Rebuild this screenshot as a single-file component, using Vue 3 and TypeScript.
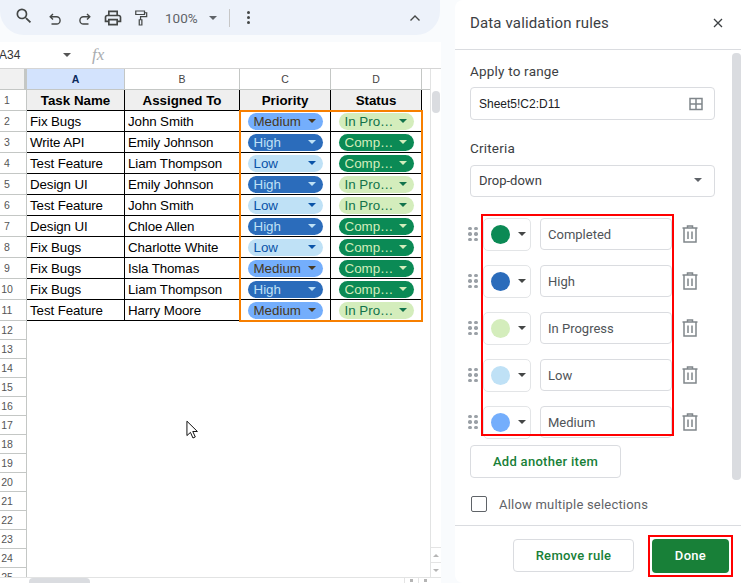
<script setup lang="ts">
interface Task {
  task: string
  person: string
  priority: string
  status: string
}

const tasks: Task[] = [
  { task: 'Fix Bugs', person: 'John Smith', priority: 'Medium', status: 'In Progress' },
  { task: 'Write API', person: 'Emily Johnson', priority: 'High', status: 'Completed' },
  { task: 'Test Feature', person: 'Liam Thompson', priority: 'Low', status: 'Completed' },
  { task: 'Design UI', person: 'Emily Johnson', priority: 'High', status: 'In Progress' },
  { task: 'Test Feature', person: 'John Smith', priority: 'Low', status: 'In Progress' },
  { task: 'Design UI', person: 'Chloe Allen', priority: 'High', status: 'Completed' },
  { task: 'Fix Bugs', person: 'Charlotte White', priority: 'Low', status: 'Completed' },
  { task: 'Fix Bugs', person: 'Isla Thomas', priority: 'Medium', status: 'Completed' },
  { task: 'Fix Bugs', person: 'Liam Thompson', priority: 'High', status: 'Completed' },
  { task: 'Test Feature', person: 'Harry Moore', priority: 'Medium', status: 'In Progress' }
]

const items = [
  { label: 'Completed', cls: 'completed' },
  { label: 'High', cls: 'high' },
  { label: 'In Progress', cls: 'progress' },
  { label: 'Low', cls: 'low' },
  { label: 'Medium', cls: 'medium' }
]

const emptyRows = Array.from({ length: 14 }, (_, i) => i + 12)

const chipClass = (value: string) => value.toLowerCase().replace('in ', '')
</script>

<template>
  <div class="app">
    <div class="left">
      <div class="toolbar">
        <svg class="tool search" viewBox="0 0 24 24" width="20" height="20"><path d="M15.5 14h-.79l-.28-.27A6.471 6.471 0 0 0 16 9.5 6.5 6.5 0 1 0 9.5 16c1.61 0 3.09-.59 4.23-1.57l.27.28v.79l5 4.99L20.49 19l-4.99-5zm-6 0C7.01 14 5 11.99 5 9.5S7.01 5 9.5 5 14 7.01 14 9.5 11.99 14 9.5 14z" /></svg>
        <svg class="tool line undo" viewBox="0 0 14 14" width="14" height="14"><path d="M5 2 2.2 4.8 5 7.6M2.2 4.8H8.5a3.6 3.6 0 0 1 0 7.2H3.5" /></svg>
        <svg class="tool line redo" viewBox="0 0 14 14" width="14" height="14"><path d="M9 2l2.8 2.8L9 7.600M11.800 4.800H5.500a3.600 3.600 0 0 0 0 7.200H10.500" /></svg>
        <svg class="tool print" viewBox="0 0 24 24" width="20" height="20"><path d="M19 8h-1V3H6v5H5c-1.660 0-3 1.340-3 3v6h4v4h12v-4h4v-6c0-1.660-1.340-3-3-3zM8 5h8v3H8V5zm8 12v2H8v-4h8v2zm2-2v-2H6v2H4v-4c0-.55.45-1 1-1h14c.55 0 1 .45 1 1v4h-2z" /></svg>
        <svg class="tool line roller" viewBox="0 0 16 20" width="14" height="18"><path d="M2 2h10v4H2zM12 4h2.500v4.500H7.500V12M6 12h3v6H6z" /></svg>
        <span class="zoom-level">100%</span>
        <span class="caret zoom-caret"></span>
        <span class="tool-sep"></span>
        <span class="dots"><i></i><i></i><i></i></span>
        <svg class="tool line chevron" viewBox="0 0 12 8" width="12" height="8"><path d="M1.500 6.500 6 2l4.500 4.500" /></svg>
      </div>

      <div class="formula-bar">
        <span class="name-box">A34</span>
        <span class="caret name-caret"></span>
        <span class="fx">fx</span>
      </div>

      <div class="sheet">
        <div class="grid-area">
          <div class="col-head">
            <div class="corner"></div>
            <div class="col-label selected">A</div>
            <div class="col-label">B</div>
            <div class="col-label">C</div>
            <div class="col-label">D</div>
            <div class="col-rest"></div>
          </div>
          <div class="row">
            <div class="row-num tall">1</div>
            <div class="cell head">Task Name</div>
            <div class="cell head">Assigned To</div>
            <div class="cell head">Priority</div>
            <div class="cell head">Status</div>
          </div>
          <div v-for="(t, i) in tasks" :key="i" class="row">
            <div class="row-num tall">{{ i + 2 }}</div>
            <div class="cell">{{ t.task }}</div>
            <div class="cell">{{ t.person }}</div>
            <div class="cell chip-cell">
              <span class="chip" :class="chipClass(t.priority)"><span class="chip-text">{{ t.priority }}</span><span class="chip-arrow"></span></span>
            </div>
            <div class="cell chip-cell">
              <span class="chip" :class="chipClass(t.status)"><span class="chip-text">{{ t.status }}</span><span class="chip-arrow"></span></span>
            </div>
          </div>
          <div v-for="n in emptyRows" :key="n" class="row-num short">{{ n }}</div>
          <div class="selection"></div>
          <svg class="cursor" viewBox="0 0 14 21" width="13" height="20"><path d="M1 1v15.500l3.800-3.400 2.700 6 2.500-1.100-2.700-5.900h5z" fill="#fff" stroke="#000" stroke-width="1" /></svg>
        </div>
        <div class="v-scroll">
          <div class="v-thumb"></div>
          <div class="v-arrows">
            <span class="mini up"></span>
            <span class="mini down"></span>
          </div>
        </div>
      </div>
      <div class="h-scroll">
        <div class="h-thumb"></div>
        <span class="h-btn"><i class="left-arrow"></i></span>
        <span class="h-btn"><i class="right-arrow"></i></span>
      </div>
    </div>

    <aside class="panel">
      <header class="panel-head">
        <h2>Data validation rules</h2>
        <svg class="close" viewBox="0 0 12 12" width="12" height="12"><path d="M2 2l8 8M10 2l-8 8" /></svg>
      </header>

      <div class="panel-body">
        <div class="form">
          <label class="field-label">Apply to range</label>
          <div class="input range-input">
            <span>Sheet5!C2:D11</span>
            <svg viewBox="0 0 14 14" width="14" height="14"><path d="M1 1.500h12v11H1zM7 1.500v11M1 7h12" /></svg>
          </div>

          <label class="field-label criteria">Criteria</label>
          <div class="input select-input">
            <span>Drop-down</span>
            <span class="caret"></span>
          </div>

          <div class="items">
            <div v-for="item in items" :key="item.label" class="item">
              <span class="grip"><i v-for="d in 6" :key="d"></i></span>
              <div class="color-btn">
                <span class="swatch" :class="item.cls"></span>
                <span class="caret"></span>
              </div>
              <div class="item-input">{{ item.label }}</div>
              <svg class="trash" viewBox="0 0 16 18" width="16" height="18"><path d="M0.500 3h15M5.500 3V1h5v2M2 3v14h12V3M6 6.500v7.500M10 6.500v7.500" /></svg>
            </div>
            <div class="red-box"></div>
          </div>

          <button class="add-btn" type="button">Add another item</button>

          <label class="check-row">
            <span class="checkbox"></span>
            <span>Allow multiple selections</span>
          </label>
        </div>
        <div class="panel-scroll"></div>
      </div>

      <footer class="panel-foot">
        <button class="remove-btn" type="button">Remove rule</button>
        <div class="done-wrap">
          <button class="done-btn" type="button">Done</button>
        </div>
      </footer>
    </aside>
  </div>
</template>

<style scoped>
.app {
  position: relative;
  display: flex;
  width: 741px;
  height: 583px;
  overflow: hidden;
  background: #f9fbfd;
  font-family: "Liberation Sans", Arial, sans-serif;
}

.left {
  display: flex;
  flex-direction: column;
  width: 441px;
  flex: none;
}

/* toolbar */
.toolbar {
  display: flex;
  align-items: center;
  width: 440px;
  height: 35px;
  box-sizing: border-box;
  background: #edf2fa;
  border-radius: 0 0 24px 24px;
  flex: none;
}

.tool {
  flex: none;
  fill: #444746;
}

.tool.line {
  fill: none;
  stroke: #444746;
  stroke-width: 1.400;
}

.search {
  margin-left: 14px;
  margin-top: -3px;
}

.undo {
  margin-left: 14px;
  margin-top: 2px;
}

.redo {
  margin-left: 16px;
  margin-top: 2px;
}

.print {
  margin-left: 11px;
}

.roller {
  margin-left: 11px;
}

.zoom-level {
  margin-left: 17px;
  font-family: Roboto, sans-serif;
  font-size: 13.500px;
  color: #5f6368;
}

.caret {
  display: inline-block;
  width: 0;
  height: 0;
  border-left: 4px solid transparent;
  border-right: 4px solid transparent;
  border-top: 4px solid #444746;
  flex: none;
}

.zoom-caret {
  margin-left: 11px;
  border-top-color: #5f6368;
}

.tool-sep {
  width: 1px;
  height: 18px;
  margin-left: 12px;
  background: #c7c7c7;
}

.dots {
  display: flex;
  flex-direction: column;
  gap: 2px;
  margin-left: 17px;
}

.dots i {
  width: 3px;
  height: 3px;
  border-radius: 50%;
  background: #444746;
}

.chevron {
  margin-left: 159px;
}

/* formula bar */
.formula-bar {
  display: flex;
  align-items: center;
  height: 26px;
  margin-top: 7px;
  box-sizing: border-box;
  background: #fff;
  flex: none;
  font-size: 12px;
  color: #333;
}

.name-box {
  margin-left: -1px;
  width: 64px;
}

.name-caret {
  border-top-color: #555;
}

.fx {
  margin-left: 21px;
  font-family: "Liberation Serif", serif;
  font-style: italic;
  font-size: 17px;
  color: #a9acaf;
}

/* sheet */
.sheet {
  display: flex;
  flex: 1;
  min-height: 0;
  background: #fff;
  border-top: 1px solid #d5d5d5;
}

.grid-area {
  position: relative;
  width: 431px;
  flex: none;
  overflow: hidden;
  border-right: 1px solid #e2e3e3;
  box-sizing: border-box;
}

.col-head {
  display: flex;
  height: 21px;
  box-sizing: border-box;
  border-bottom: 1px solid #c4c7c5;
}

.corner {
  width: 27px;
  box-sizing: border-box;
  background: #f1f1f1;
  border-right: 3px solid #c4c7c5;
}

.col-label {
  display: flex;
  align-items: center;
  justify-content: center;
  box-sizing: border-box;
  width: 91px;
  border-right: 1px solid #c4c7c5;
  font-size: 10.500px;
  color: #444;
}

.col-label:nth-child(2) {
  width: 98px;
}

.col-label:nth-child(3) {
  width: 115px;
}

.col-label.selected {
  background: #d3e3fd;
  color: #0b2a5c;
  font-weight: 700;
}

.col-rest {
  flex: 1;
  background: #fff;
}

.row {
  display: grid;
  grid-template-columns: 27px 98px 115px 91px 91px;
  height: 21px;
}

.row-num {
  display: flex;
  align-items: center;
  justify-content: center;
  width: 27px;
  box-sizing: border-box;
  padding-right: 12px;
  font-size: 10.500px;
  color: #555;
  border-right: 1px solid #c4c7c5;
  border-bottom: 1px solid #c4c7c5;
  background: #fff;
}

.row-num.tall {
  height: 21px;
}

.row-num.short {
  height: 19px;
}

.cell {
  display: flex;
  align-items: center;
  box-sizing: border-box;
  height: 21px;
  padding-left: 3px;
  border-right: 1px solid #000;
  border-bottom: 1px solid #000;
  font-size: 13.330px;
  color: #000;
  white-space: nowrap;
  overflow: hidden;
  letter-spacing: -0.100px;
}

.cell.head {
  justify-content: center;
  padding-left: 0;
  background: #efefef;
  font-weight: 700;
  letter-spacing: 0;
}

.chip-cell {
  justify-content: center;
  padding-left: 0;
}

.chip {
  display: flex;
  align-items: center;
  box-sizing: border-box;
  width: 75px;
  height: 17px;
  padding: 0 6px;
  border-radius: 9px;
  letter-spacing: 0;
}

.chip-text {
  width: 50px;
  overflow: hidden;
  text-overflow: ellipsis;
  white-space: nowrap;
  flex: none;
}

.chip-arrow {
  width: 0;
  height: 0;
  margin-left: 4px;
  border-left: 4px solid transparent;
  border-right: 4px solid transparent;
  border-top: 4px solid currentColor;
  flex: none;
}

.medium {
  background: #74aefc;
  color: #473821;
}

.high {
  background: #2b6cbb;
  color: #bfe1f6;
}

.low {
  background: #bfe1f6;
  color: #0a53a8;
}

.completed {
  background: #0b8a55;
  color: #d4edbc;
}

.progress {
  background: #d4edbc;
  color: #11734b;
}

.selection {
  position: absolute;
  left: 239px;
  top: 41px;
  width: 184px;
  height: 212px;
  box-sizing: border-box;
  border: 2px solid #f77f00;
  pointer-events: none;
}

.cursor {
  position: absolute;
  left: 186px;
  top: 351px;
}

.v-scroll {
  display: flex;
  flex-direction: column;
  flex: 1;
  background: #fff;
}

.v-thumb {
  width: 8px;
  height: 22px;
  margin: 22px 0 0 1px;
  border-radius: 4px;
  background: #dadce0;
}

.v-arrows {
  display: flex;
  flex-direction: column;
  margin-top: auto;
}

.mini {
  display: flex;
  align-items: center;
  justify-content: center;
  height: 14px;
  border-top: 1px solid #e4e4e4;
}

.mini::after {
  content: "";
  border-left: 3px solid transparent;
  border-right: 3px solid transparent;
}

.mini.up::after {
  border-bottom: 3px solid #b5b5b5;
}

.mini.down::after {
  border-top: 3px solid #b5b5b5;
}

.h-scroll {
  display: flex;
  height: 6px;
  flex: none;
  background: #fff;
  border-top: 1px solid #e2e3e3;
  box-sizing: border-box;
}

.h-thumb {
  width: 61px;
  height: 8px;
  margin-left: 29px;
  margin-right: 314px;
  border-radius: 4px;
  background: #dadce0;
}

.h-btn {
  display: flex;
  justify-content: center;
  width: 14px;
  padding-top: 1px;
  box-sizing: border-box;
  border-left: 1px solid #e4e4e4;
}

.h-btn i {
  width: 3px;
  height: 3px;
  background: #b5b5b5;
}

/* panel */
.panel {
  display: flex;
  flex-direction: column;
  width: 286px;
  margin-left: 14px;
  background: #fff;
  border-radius: 8px 0 0 8px;
  font-family: Roboto, sans-serif;
  color: #3c4043;
  flex: none;
}

.panel-head {
  display: flex;
  align-items: center;
  justify-content: space-between;
  height: 50px;
  box-sizing: border-box;
  padding: 0 17px 4px 15px;
  border-bottom: 1px solid #dadce0;
  flex: none;
}

.panel-head h2 {
  margin: 0;
  font-size: 15px;
  font-weight: 400;
  letter-spacing: 0.150px;
  color: #3c4043;
}

.close {
  fill: none;
  stroke: #3c4043;
  stroke-width: 1.300;
}

.panel-body {
  display: flex;
  flex: 1;
  min-height: 0;
}

.form {
  width: 277px;
  box-sizing: border-box;
  padding: 13px 0 0 15px;
  flex: none;
}

.field-label {
  display: block;
  height: 24px;
  font-size: 13.500px;
  line-height: 16px;
  letter-spacing: 0.200px;
}

.input {
  display: flex;
  align-items: center;
  justify-content: space-between;
  box-sizing: border-box;
  width: 245px;
  border: 1px solid #dadce0;
  border-radius: 4px;
  padding: 0 11px 0 8px;
  font-size: 13px;
  color: #202124;
}

.range-input {
  height: 33px;
}

.range-input span {
  padding-top: 1px;
  font-family: "Liberation Sans", sans-serif;
  font-size: 12px;
}

.range-input svg {
  fill: none;
  stroke: #80868b;
  stroke-width: 1.500;
}

.criteria {
  height: 25px;
  margin-top: 20px;
}

.select-input {
  height: 32px;
  padding-bottom: 2px;
  color: #3c4043;
}

.select-input .caret {
  border-top-color: #5f6368;
  margin-right: 1px;
}

.items {
  position: relative;
  display: flex;
  flex-direction: column;
  gap: 15px;
  margin: 21px 0 0 -2px;
}

.item {
  display: flex;
  align-items: center;
  height: 32px;
}

.grip {
  display: grid;
  grid-template-columns: 3.500px 3.500px;
  gap: 2px 2.500px;
  width: 15px;
  flex: none;
}

.grip i {
  width: 3.500px;
  height: 3.500px;
  border-radius: 50%;
  background: #9aa0a6;
}

.color-btn {
  display: flex;
  align-items: center;
  box-sizing: border-box;
  width: 48px;
  height: 33px;
  padding-left: 7px;
  border: 1px solid #e3e5e7;
  border-radius: 5px;
  flex: none;
}

.swatch {
  width: 19px;
  height: 19px;
  border-radius: 50%;
  flex: none;
}

.color-btn .caret {
  margin-left: 8px;
}

.item-input {
  display: flex;
  align-items: center;
  box-sizing: border-box;
  width: 132px;
  height: 32px;
  margin-left: 9px;
  padding-left: 7px;
  border: 1px solid #dadce0;
  border-radius: 4px;
  font-size: 13px;
  color: #505458;
  flex: none;
}

.trash {
  margin-left: 10px;
  fill: none;
  stroke: #80868b;
  stroke-width: 1.500;
  flex: none;
}

.red-box {
  position: absolute;
  left: 13px;
  top: -4px;
  width: 193px;
  height: 222px;
  box-sizing: border-box;
  border: 2px solid #f00;
  pointer-events: none;
}

.add-btn {
  display: block;
  box-sizing: border-box;
  width: 151px;
  height: 33px;
  margin-top: 7px;
  padding: 0;
  background: #fff;
  border: 1px solid #dadce0;
  border-radius: 4px;
  font-family: Roboto, sans-serif;
  font-size: 13px;
  font-weight: 500;
  letter-spacing: 0.300px;
  color: #188038;
}

.check-row {
  display: flex;
  align-items: center;
  gap: 12px;
  margin-top: 18px;
  font-size: 13px;
  letter-spacing: 0.200px;
  color: #5f6368;
}

.checkbox {
  width: 16px;
  height: 16px;
  margin-left: 1px;
  box-sizing: border-box;
  border: 1px solid #5f6368;
  border-radius: 2px;
}

.panel-scroll {
  width: 9px;
  height: 427px;
  margin-top: 3px;
  border-radius: 4px;
  background: #dadce0;
  flex: none;
}

.panel-foot {
  display: flex;
  align-items: center;
  height: 58px;
  box-sizing: border-box;
  padding: 2px 0 0 58px;
  border-top: 1px solid #dadce0;
  flex: none;
}

.remove-btn {
  box-sizing: border-box;
  width: 121px;
  height: 33px;
  padding: 0;
  background: #fff;
  border: 1px solid #dadce0;
  border-radius: 4px;
  font-family: Roboto, sans-serif;
  font-size: 13px;
  font-weight: 500;
  letter-spacing: 0.300px;
  color: #188038;
}

.done-wrap {
  box-sizing: border-box;
  width: 85px;
  height: 42px;
  margin-left: 14px;
  padding: 2px;
  border: 2px solid #f00;
}

.done-btn {
  display: block;
  width: 100%;
  height: 100%;
  padding: 0;
  background: #188038;
  border: none;
  border-radius: 4px;
  font-family: Roboto, sans-serif;
  font-size: 13px;
  font-weight: 500;
  letter-spacing: 0.300px;
  color: #fff;
}
</style>

<style>
body {
  margin: 0;
  background: #f9fbfd;
}
</style>
